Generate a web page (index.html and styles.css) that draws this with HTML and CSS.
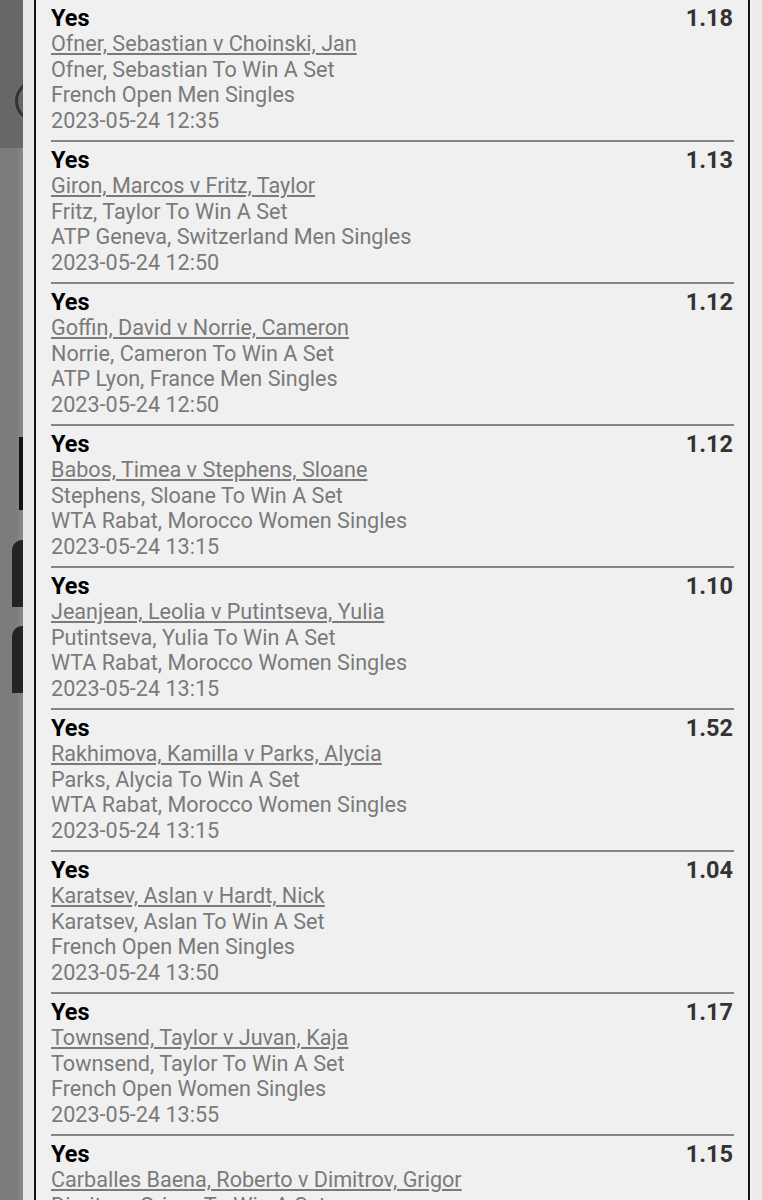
FILE: index.html
```html
<!DOCTYPE html>
<html>
<head>
<meta charset="utf-8">
<link rel="stylesheet" href="styles.css">
</head>
<body>
<div class="page">
  <div class="backdrop">
    <div class="bd-top"><div class="ring"></div></div>
    <div class="bd-bottom">
      <div class="bar"></div>
      <div class="tile"></div>
      <div class="tile"></div>
    </div>
  </div>
  <div class="strip"></div>
  <div class="panel">
    <div class="bet">
      <div class="row"><span class="sel">Yes</span><span class="odds">1.18</span></div>
      <a class="event">Ofner, Sebastian v Choinski, Jan</a>
      <div class="info">Ofner, Sebastian To Win A Set</div>
      <div class="info">French Open Men Singles</div>
      <div class="info">2023-05-24 12:35</div>
    </div>
    <div class="bet">
      <div class="row"><span class="sel">Yes</span><span class="odds">1.13</span></div>
      <a class="event">Giron, Marcos v Fritz, Taylor</a>
      <div class="info">Fritz, Taylor To Win A Set</div>
      <div class="info">ATP Geneva, Switzerland Men Singles</div>
      <div class="info">2023-05-24 12:50</div>
    </div>
    <div class="bet">
      <div class="row"><span class="sel">Yes</span><span class="odds">1.12</span></div>
      <a class="event">Goffin, David v Norrie, Cameron</a>
      <div class="info">Norrie, Cameron To Win A Set</div>
      <div class="info">ATP Lyon, France Men Singles</div>
      <div class="info">2023-05-24 12:50</div>
    </div>
    <div class="bet">
      <div class="row"><span class="sel">Yes</span><span class="odds">1.12</span></div>
      <a class="event">Babos, Timea v Stephens, Sloane</a>
      <div class="info">Stephens, Sloane To Win A Set</div>
      <div class="info">WTA Rabat, Morocco Women Singles</div>
      <div class="info">2023-05-24 13:15</div>
    </div>
    <div class="bet">
      <div class="row"><span class="sel">Yes</span><span class="odds">1.10</span></div>
      <a class="event">Jeanjean, Leolia v Putintseva, Yulia</a>
      <div class="info">Putintseva, Yulia To Win A Set</div>
      <div class="info">WTA Rabat, Morocco Women Singles</div>
      <div class="info">2023-05-24 13:15</div>
    </div>
    <div class="bet">
      <div class="row"><span class="sel">Yes</span><span class="odds">1.52</span></div>
      <a class="event">Rakhimova, Kamilla v Parks, Alycia</a>
      <div class="info">Parks, Alycia To Win A Set</div>
      <div class="info">WTA Rabat, Morocco Women Singles</div>
      <div class="info">2023-05-24 13:15</div>
    </div>
    <div class="bet">
      <div class="row"><span class="sel">Yes</span><span class="odds">1.04</span></div>
      <a class="event">Karatsev, Aslan v Hardt, Nick</a>
      <div class="info">Karatsev, Aslan To Win A Set</div>
      <div class="info">French Open Men Singles</div>
      <div class="info">2023-05-24 13:50</div>
    </div>
    <div class="bet">
      <div class="row"><span class="sel">Yes</span><span class="odds">1.17</span></div>
      <a class="event">Townsend, Taylor v Juvan, Kaja</a>
      <div class="info">Townsend, Taylor To Win A Set</div>
      <div class="info">French Open Women Singles</div>
      <div class="info">2023-05-24 13:55</div>
    </div>
    <div class="bet">
      <div class="row"><span class="sel">Yes</span><span class="odds">1.15</span></div>
      <a class="event">Carballes Baena, Roberto v Dimitrov, Grigor</a>
      <div class="info">Dimitrov, Grigor To Win A Set</div>
      <div class="info">French Open Men Singles</div>
      <div class="info">2023-05-24 14:00</div>
    </div>
  </div>
  <div class="strip-right"></div>
</div>
</body>
</html>
```

FILE: styles.css
```css
html, body {
  margin: 0;
  padding: 0;
  height: 1200px;
  overflow: hidden;
  background: #7a7a7a;
}

.page {
  display: flex;
  height: 1200px;
  font-family: Roboto, "Liberation Sans", sans-serif;
}

.backdrop {
  width: 23px;
  flex: none;
  display: flex;
  flex-direction: column;
}

.bd-top {
  height: 148px;
  background: #676767;
  display: flex;
  justify-content: flex-end;
  align-items: flex-start;
  overflow: hidden;
}

.ring {
  margin-top: 80px;
  margin-right: -34px;
  width: 36px;
  height: 36px;
  border: 3px solid #333;
  border-radius: 50%;
  flex: none;
}

.bd-bottom {
  flex: 1;
  background: linear-gradient(to right, #7c7c7c 0%, #7c7c7c 70%, #8a8a8a 100%);
  display: flex;
  flex-direction: column;
  align-items: flex-end;
}

.bar {
  margin-top: 289px;
  width: 4px;
  height: 73px;
  background: #111;
}

.tile {
  margin-top: 30px;
  width: 11px;
  height: 67px;
  background: #232323;
  border-radius: 10px 0 0 0;
}

.tile + .tile {
  margin-top: 19px;
}

.strip {
  width: 11px;
  flex: none;
  background: #e8e8e8;
}

.panel {
  width: 683px;
  flex: none;
  background: #f0f0f0;
  border-left: 2px solid #111;
  border-right: 2px solid #111;
  padding: 0 14px 0 15px;
  overflow: hidden;
}

.strip-right {
  flex: 1;
  background: #ececec;
  border-left: 1px solid #f8f8f8;
}

.bet {
  padding: 5.5px 0 7px;
  border-bottom: 2px solid #858585;
  font-size: 21.6px;
  line-height: 25.5px;
}

.row {
  display: flex;
  justify-content: space-between;
  font-size: 23.5px;
}

.sel {
  font-weight: 700;
  color: #000;
}

.odds {
  font-weight: 700;
  color: #333;
  padding-right: 1px;
}

.event {
  display: block;
  color: #7a7a7a;
  text-decoration: underline;
  text-underline-offset: 2px;
}

.info {
  color: #7a7a7a;
}
```
